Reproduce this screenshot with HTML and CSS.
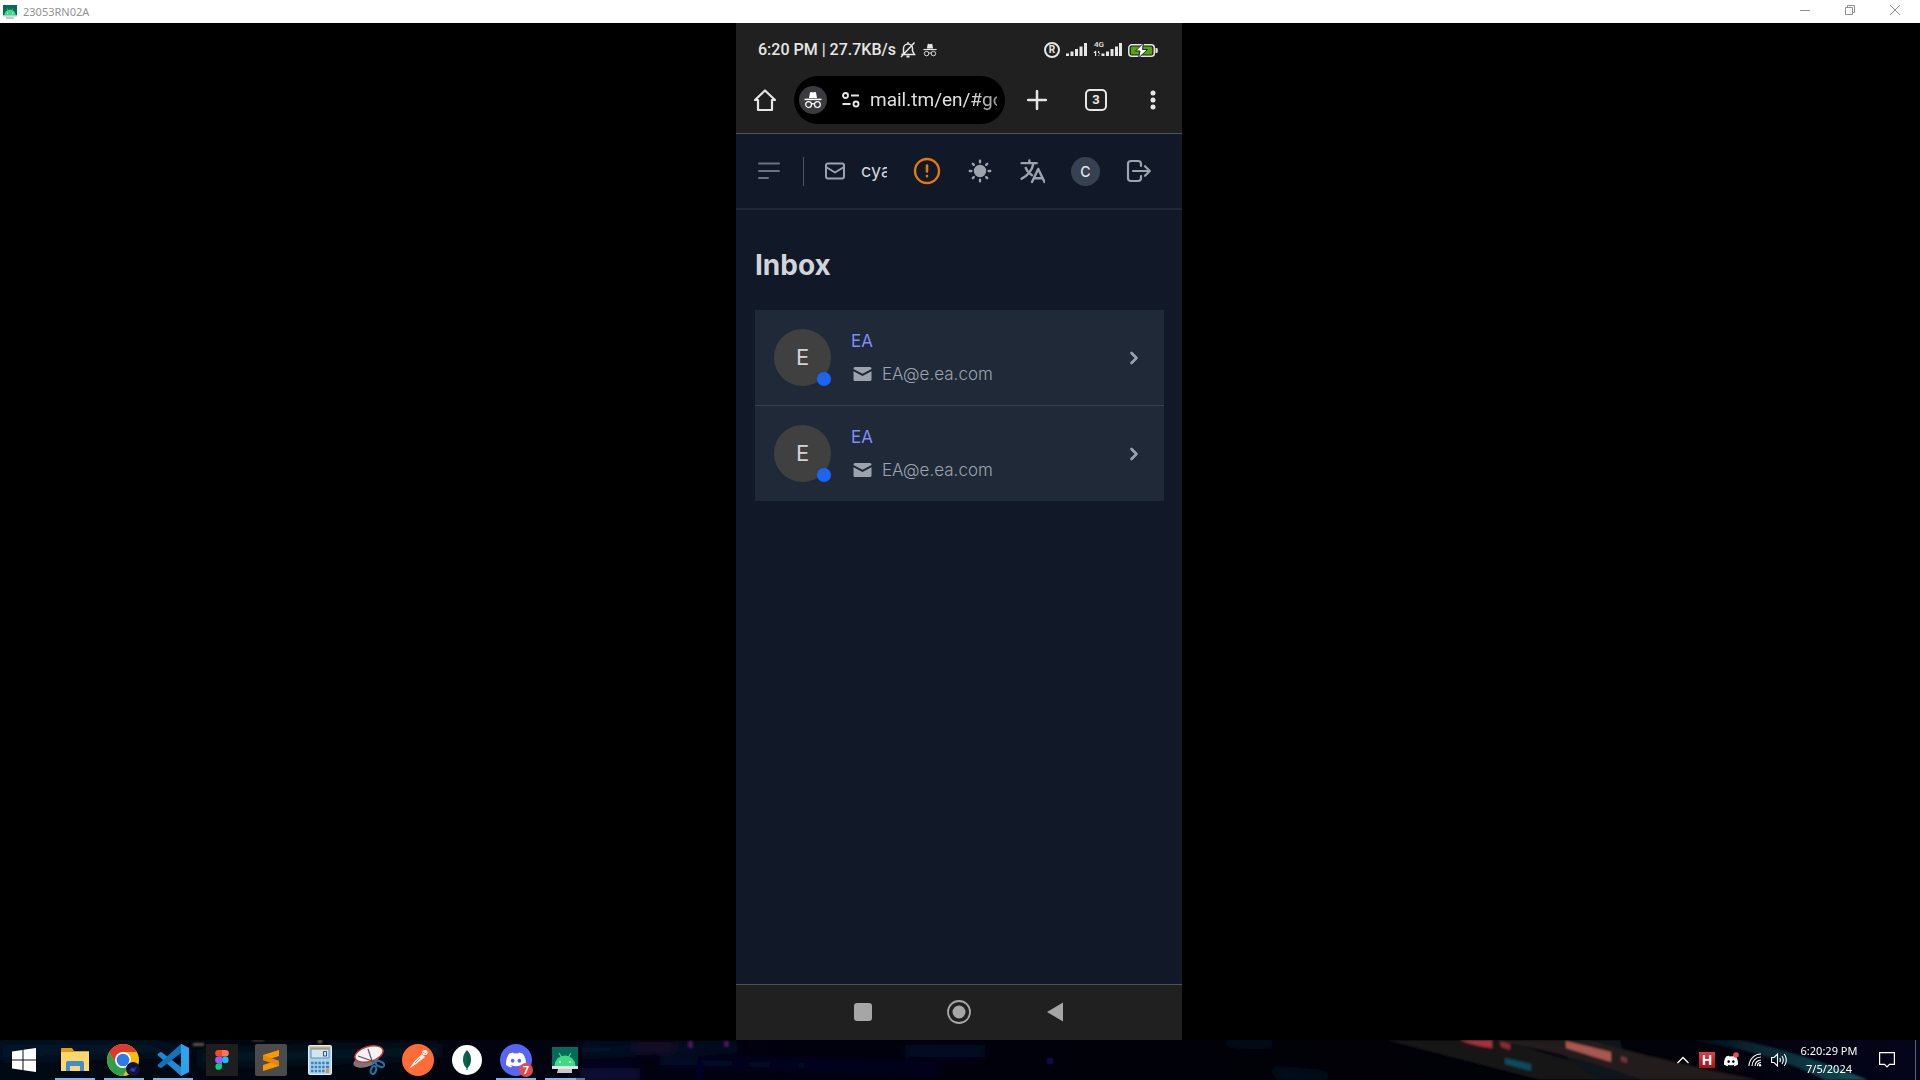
FILE: index.html
```html
<!DOCTYPE html>
<html lang="en">
<head>
<meta charset="utf-8">
<meta name="viewport" content="width=device-width, initial-scale=1">
<title>23053RN02A</title>
<link rel="stylesheet" href="styles.css">
</head>
<body>
<svg class="defs" width="0" height="0" aria-hidden="true">
  <symbol id="incognito" viewBox="0 0 18 18">
    <path d="M5 7 L6 1.6 Q6.3 .8 7.2 1 L9 1.6 L10.8 1 Q11.7 .8 12 1.6 L13 7z" fill="currentColor"/>
    <path d="M.5 8.4H17.5" stroke="currentColor" stroke-width="1.5"/>
    <g fill="none" stroke="currentColor" stroke-width="1.2"><circle cx="4.6" cy="13.6" r="2.9"/><circle cx="13.4" cy="13.6" r="2.9"/><path d="M7.5 13.2Q9 12.2 10.5 13.2"/></g>
  </symbol>
  <symbol id="droid" viewBox="0 0 26 26">
    <path d="M0 0H26V21H0z" fill="#07695c"/>
    <path d="M7 6l2.5 4M19 6l-2.5 4" stroke="#3ddc84" stroke-width="1.2"/>
    <path d="M2.500 19a10.500 10.500 0 0 1 21 0z" fill="#3ddc84"/>
    <circle cx="8" cy="15" r="1.100" fill="#fff"/><circle cx="18" cy="15" r="1.100" fill="#fff"/>
    <path d="M0 19H26V22H0z" fill="#e4e4e4"/><path d="M6 22H20V26H5z" fill="#c8c8c8"/>
  </symbol>
  <symbol id="envelope" viewBox="0 0 20 16">
    <path d="M2.500 1H17.500A1.500 1.500 0 0 1 19 2.500V3L10 7.800 1 3V2.500A1.500 1.500 0 0 1 2.500 1z" fill="currentColor"/>
    <path d="M1 5.200L10 10l9-4.800V13.500A1.500 1.500 0 0 1 17.500 15H2.500A1.500 1.500 0 0 1 1 13.500z" fill="currentColor"/>
  </symbol>
  <symbol id="chevron" viewBox="0 0 10 14"><path d="M2.500 2L7.500 7l-5 5" fill="none" stroke="currentColor" stroke-width="2.600" stroke-linecap="round" stroke-linejoin="round"/></symbol>
  <symbol id="discord" viewBox="0 0 24 24">
    <path d="M20.300 4.400A19.800 19.800 0 0 0 15.400 2.900c-.2.400-.5.900-.6 1.300a18.300 18.300 0 0 0-5.500 0C9.100 3.800 8.800 3.300 8.600 2.900A19.700 19.700 0 0 0 3.700 4.400C.5 9 -.3 13.600.1 18.100a19.900 19.900 0 0 0 6 3c.5-.6.900-1.300 1.200-2a13 13 0 0 1-1.900-.9l.5-.3a14.200 14.200 0 0 0 12.200 0l.5.3c-.6.400-1.200.7-1.900.9.400.7.800 1.400 1.200 2a19.800 19.800 0 0 0 6-3c.5-5.200-.8-9.700-3.600-13.700zM8 15.300c-1.200 0-2.200-1.100-2.200-2.400S6.800 10.500 8 10.500s2.200 1.100 2.200 2.400S9.200 15.300 8 15.300zm8 0c-1.200 0-2.200-1.100-2.200-2.400s1-2.400 2.200-2.400 2.200 1.100 2.200 2.400-1 2.400-2.200 2.400z" fill="#fff"/>
  </symbol>
</svg>

<header class="titlebar">
  <svg class="titlebar-icon" width="14" height="14"><use href="#droid"/></svg>
  <span class="titlebar-name">23053RN02A</span>
  <div class="window-controls">
    <button aria-label="Minimize"><svg width="10" height="10"><path d="M0 5.500H10" stroke="#8f8f8f"/></svg></button>
    <button aria-label="Restore"><svg width="10" height="10" fill="none" stroke="#8f8f8f"><path d="M.5 2.500H7.500V9.500H.5zM2.500 2.500V.5H9.500V7.500H7.500"/></svg></button>
    <button aria-label="Close"><svg width="10" height="10" stroke="#8f8f8f"><path d="M0 0L10 10M10 0L0 10"/></svg></button>
  </div>
</header>

<main class="stage">
  <div class="phone">
    <div class="status">
      <span>6:20 PM | 27.7KB/s</span>
      <svg width="16" height="18" viewBox="0 0 16 18" fill="none" stroke="#e6e6e6" stroke-width="1.500"><path d="M3.500 13V7.500a4.500 4.500 0 0 1 9 0V10L14.500 13.500H1.500zM8 3V1M14.500 1.500L1 16"/><path d="M6.500 15.500h3" stroke-width="2"/></svg>
      <svg width="14" height="14" class="status-incognito"><use href="#incognito"/></svg>
      <div class="status-right">
        <span class="roaming">R</span>
        <svg width="21" height="14" fill="#e6e6e6"><path d="M0 10.500h3v2.500H0zM4.500 8.500h3v4.500h-3zM9 6h3v7H9zM13.500 3.500h3v9.500h-3zM18 0h3v13H18z"/></svg>
        <div class="signal">
          <span class="net">4G</span>
          <svg width="29" height="14" fill="#e6e6e6"><path d="M8.500 10.500h3v2.500h-3zM13 8.500h3v4.500h-3zM17.500 6h3v7h-3zM22 3.500h3v9.500H22zM26 0h3v13h-3zM2 8h1.200v5H2zM.3 10L2.600 7.500V10zM5 8h1.200v5H5zM5 13l2.500-3H5z"/></svg>
        </div>
        <svg width="30" height="15" viewBox="0 0 30 15"><rect x=".8" y="1.800" width="25.500" height="11.500" rx="3" fill="none" stroke="#e6e6e6" stroke-width="1.500"/><rect x="2.800" y="3.500" width="21.500" height="8" rx="1.500" fill="#50a60c"/><path d="M27.500 5h1.500q.8 0 .8 2.500T29 10h-1.500z" fill="#e6e6e6"/><path d="M15.500 0L7.500 8h4.500L10.500 15 19.500 6.500H14.500z" fill="#fff" stroke="#202020"/></svg>
      </div>
    </div>

    <div class="browser-bar">
      <button aria-label="Home"><svg width="22" height="24" viewBox="0 0 22 24" fill="none" stroke="#e6e6e6" stroke-width="2.200" stroke-linejoin="round"><path d="M1 12L11 2.500 21 12H18V22H4V12z"/></svg></button>
      <div class="omnibox">
        <span class="incog"><svg width="18" height="18"><use href="#incognito"/></svg></span>
        <svg class="tune" width="18" height="16" viewBox="0 0 18 16" fill="none" stroke="#e6e6e6" stroke-width="1.900"><circle cx="3.500" cy="3.500" r="2.500"/><path d="M9 3.500h8M.5 12h8"/><circle cx="14" cy="12" r="2.500"/></svg>
        <input type="text" aria-label="Address" value="mail.tm/en/#go">
      </div>
      <button aria-label="New tab"><svg width="20" height="20"><path d="M10 1V19M1 10H19" stroke="#e6e6e6" stroke-width="2.500" stroke-linecap="round"/></svg></button>
      <button class="tabs" aria-label="Open tabs">3</button>
      <button aria-label="More"><svg width="6" height="20" fill="#e6e6e6"><circle cx="3" cy="3" r="2.500"/><circle cx="3" cy="10" r="2.500"/><circle cx="3" cy="17" r="2.500"/></svg></button>
    </div>

    <div class="app-bar">
      <button aria-label="Menu"><svg width="22" height="18" stroke="#6b7280" stroke-width="2" stroke-linecap="round"><path d="M1 1.500H21M1 9H21M1 16H10"/></svg></button>
      <div class="address">
        <svg width="20" height="18" fill="none" stroke="#9ca3af" stroke-width="2" stroke-linejoin="round"><rect x="1" y="1.500" width="18" height="15" rx="2"/><path d="M1 5l9 5.500L19 5"/></svg>
        <input type="text" aria-label="Your address" value="cyan" readonly>
      </div>
      <div class="actions">
        <button aria-label="Status"><svg width="28" height="28" fill="none" stroke="#e07b0c" stroke-width="2.400" stroke-linecap="round"><circle cx="14" cy="14" r="12"/><path d="M14 8.500V14.500M14 19v.2" stroke-width="2.600"/></svg></button>
        <button aria-label="Theme"><svg width="24" height="24" stroke="#9ca3af" stroke-width="2.400" stroke-linecap="round"><circle cx="12" cy="12" r="5" fill="#9ca3af"/><path d="M12 1.800v1.500M12 20.700v1.500M1.800 12h1.500M20.700 12h1.500M4.800 4.800l1 1M18.200 18.200l1 1M4.800 19.200l1-1M18.200 5.800l1-1"/></svg></button>
        <button aria-label="Language"><svg width="25" height="25" viewBox="0 0 24 24" fill="none" stroke="#9ca3af" stroke-width="2.300" stroke-linecap="round" stroke-linejoin="round"><path d="M1.500 4H16M9 1.500V4M13 4C11.500 11 7 16 1.500 19M5.500 8.500c1 3 3 5 6 7M11.500 22L17.500 9.500l6 12.500M13.500 18.500h8"/></svg></button>
        <button class="user" aria-label="Account">C</button>
        <button aria-label="Log out"><svg width="25" height="24" fill="none" stroke="#9ca3af" stroke-width="2.200" stroke-linecap="round" stroke-linejoin="round"><path d="M15 7V5a3 3 0 0 0-3-3H5a3 3 0 0 0-3 3V19a3 3 0 0 0 3 3h7a3 3 0 0 0 3-3V17M7 12H23.500M19 7.200L23.800 12 19 16.800"/></svg></button>
      </div>
    </div>

    <div class="inbox">
      <h1>Inbox</h1>
      <ul class="messages">
        <li><a href="#message-1">
          <span class="avatar">E</span>
          <span class="sender"><span class="name">EA</span><span class="mail"><svg width="21" height="16"><use href="#envelope"/></svg>EA@e.ea.com</span></span>
          <svg width="10" height="14" class="go"><use href="#chevron"/></svg>
        </a></li>
        <li><a href="#message-2">
          <span class="avatar">E</span>
          <span class="sender"><span class="name">EA</span><span class="mail"><svg width="21" height="16"><use href="#envelope"/></svg>EA@e.ea.com</span></span>
          <svg width="10" height="14" class="go"><use href="#chevron"/></svg>
        </a></li>
      </ul>
    </div>

    <nav class="phone-nav">
      <button aria-label="Recents"><svg width="18" height="18"><rect width="18" height="18" rx="3" fill="#a6a6a6"/></svg></button>
      <button aria-label="Home screen"><svg width="24" height="24"><circle cx="12" cy="12" r="11" fill="none" stroke="#a6a6a6" stroke-width="1.800"/><circle cx="12" cy="12" r="6.500" fill="#a6a6a6"/></svg></button>
      <button aria-label="Back"><svg width="18" height="20"><path d="M1 10L17 .5V19.500z" fill="#a6a6a6"/></svg></button>
    </nav>
  </div>
</main>

<footer class="taskbar">
  <svg class="wallpaper" viewBox="0 0 1920 40" preserveAspectRatio="none" aria-hidden="true">
    <defs>
      <filter id="soft"><feGaussianBlur stdDeviation="1"/></filter>
      <filter id="wide" x="-20%" y="-50%" width="140%" height="200%"><feGaussianBlur stdDeviation="5"/></filter>
      <linearGradient id="base"><stop offset="0" stop-color="#010a14"/><stop offset=".2" stop-color="#01050d"/><stop offset=".35" stop-color="#010110"/><stop offset=".7" stop-color="#010107"/><stop offset=".88" stop-color="#02020a"/><stop offset="1" stop-color="#04041c"/></linearGradient>
      <linearGradient id="teal"><stop offset="0" stop-color="#03121f"/><stop offset=".8" stop-color="#135058"/><stop offset="1" stop-color="#1d6a70"/></linearGradient>
    </defs>
    <rect width="1920" height="40" fill="url(#base)"/>
    <g filter="url(#wide)">
      <path d="M0 2H150L200 14 0 20z" fill="#03182a"/><path d="M200 10L440 4V18L200 26z" fill="#021523"/>
      <path d="M580 4H740V10L580 16z" fill="#04142c"/><path d="M580 28h60v12h-60z" fill="#08083a"/><path d="M660 18L940 26V32L660 26z" fill="#06082e"/>
      <path d="M905 5h80v12h-80z" fill="#020f28"/><path d="M1215 0h60v6h-40zM1270 28l60 6v6h-50z" fill="#031626"/>
      <path d="M635 2h40v10h-40z" fill="#1b0a2e"/>
    </g>
    <g filter="url(#soft)">
      <path d="M1385 0H1500L1640 40H1540z" fill="#131419"/><path d="M1540 0H1620L1632 40H1600z" fill="#08141b"/>
      <path d="M1490 0H1590Q1660 20 1760 40H1640Q1580 16 1490 0z" fill="#201a1e"/>
      <path d="M1460 0h32v8q-18-2-32-8z" fill="#a8303a"/><path d="M1500 1l10 3v6l-9-3z" fill="#8b2a34"/>
      <path d="M1566 1L1611 12V22L1566 8z" fill="#a8584f"/><path d="M1621 16l6 2v5l-6-2z" fill="#7b3536"/>
      <path d="M1505 18l26 6v7l-26-7z" fill="#0b4b5d"/>
      <path d="M1690 0H1740Q1800 12 1868 40H1825Q1770 12 1690 0z" fill="url(#teal)" opacity=".8"/>
      <path d="M688 1h5v7h-5zM724 1h5v6h-5z" fill="#4a165a"/><path d="M193 3h11v3h-11z" fill="#5c5548"/><path d="M252 0h12v1h-12zM318 0h4v3h-4z" fill="#6d6a55"/>
      <path d="M696 22h7v18h-7z" fill="#05052a"/><circle cx="1050" cy="21" r="4" fill="#07073c"/>
    </g>
  </svg>

  <button class="start" aria-label="Start"><svg width="24" height="24" fill="#fff"><path d="M0 3.400L10.500 2V11.500H0zM11.500 1.800L24 0V11.500H11.500zM0 12.500H10.500V22L0 20.600zM11.500 12.500H24V24L11.500 22.200z"/></svg></button>
  <div class="apps">
    <button class="running" aria-label="File Explorer"><svg width="28" height="26"><path d="M0 1.500Q0 1 1 1H11L13 4H28V9H0z" fill="#dd9b17"/><path d="M0 5H28V24H0z" fill="#ffd768"/><path d="M5 24V16a2 2 0 0 1 2-2H21a2 2 0 0 1 2 2V24H19V19H9V24z" fill="#3c8fd6"/></svg></button>
    <button class="running" aria-label="Chrome"><svg width="34" height="32" viewBox="0 0 34 32"><circle cx="16" cy="16" r="16" fill="#fbbc05"/><path d="M2.150 8A16 16 0 0 1 29.850 8H16L9.070 20z" fill="#e0382c"/><path d="M2.150 8L9.070 20Q12 24 16 24L22 21 16 32A16 16 0 0 1 2.150 8z" fill="#2fa04a"/><circle cx="16" cy="16" r="8" fill="#fff"/><circle cx="16" cy="16" r="6.300" fill="#2d7bea"/><circle cx="26" cy="25" r="7" fill="#10133a"/><path d="M23 27l2-3 2 3 2-4" stroke="#33338c" stroke-width="1.200" fill="none"/><circle cx="26" cy="26" r="1.800" fill="#3d39d8"/></svg></button>
    <button class="running" aria-label="Visual Studio Code"><svg width="32" height="32" viewBox="0 0 32 32"><path d="M24 0L32 4V28L24 32L1 11.500Q0 10.600 1 9.800L3 8.200Q4 7.800 5 8.500L24 23z" fill="#1f8ad2"/><path d="M24 0L1 20.500Q0 21.400 1 22.200L3 23.800Q4 24.200 5 23.500L24 9z" fill="#0f74ba"/><path d="M24 0L32 4V28L24 32z" fill="#2ba4ee"/></svg></button>
    <button aria-label="Figma"><svg width="32" height="32"><path d="M0 0H32V32H0z" fill="#1e1e1e"/><path d="M16 6H12.500a3.300 3.300 0 0 0 0 6.600H16z" fill="#f24e1e"/><path d="M16 6h3.500a3.300 3.300 0 0 1 0 6.600H16z" fill="#ff7262"/><path d="M16 12.600H12.500a3.300 3.300 0 0 0 0 6.600H16z" fill="#a259ff"/><circle cx="19.300" cy="15.900" r="3.300" fill="#1abcfe"/><path d="M16 19.200H12.500a3.300 3.300 0 1 0 3.500 3.300z" fill="#0acf83"/></svg></button>
    <button aria-label="Sublime Text"><svg width="32" height="32"><rect width="32" height="32" rx="2" fill="#4b4b4b"/><path d="M8 11L24 6V12L16 14.500 24 17V22L8 27V21L16 18.500 8 16z" fill="#ff9800"/><path d="M8 11L24 17V22L8 16z" fill="#e88605"/></svg></button>
    <button aria-label="Calculator"><svg width="24" height="30"><rect x=".5" y=".5" width="23" height="29" rx="1" fill="#a9d3ef" stroke="#e1f0fa"/><path d="M2 2H22V4H2z" fill="#f3a33b"/><path d="M3 4H21V13H3z" fill="#d4e5f0" stroke="#5e8fb6"/><path d="M15.500 6.500h3v4.500h-3z" fill="none" stroke="#305778"/><path d="M3 18H17M3 22H17M3 26H17" stroke="#3d80b5" stroke-width="2.500" stroke-dasharray="2.500 1.200"/><path d="M18 18H21M18 22h3" stroke="#3d80b5" stroke-width="2.500"/><path d="M18 24h3v4h-3z" fill="#f08a24"/></svg></button>
    <button aria-label="Snipping Tool"><svg width="32" height="30"><ellipse cx="13" cy="16" rx="13" ry="6" transform="rotate(-15 13 16)" fill="#7b7777"/><ellipse cx="16" cy="9" rx="14.500" ry="7.500" transform="rotate(-16 16 9)" fill="#f3f3f5" stroke="#cc3039" stroke-width="1.400"/><path d="M15 4L20 19M5 11l17 6" stroke="#555" stroke-width="1.200"/><g fill="none" stroke="#1b74ae" stroke-width="2"><ellipse cx="27" cy="19" rx="4.500" ry="2.500" transform="rotate(25 27 19)"/><ellipse cx="20.500" cy="25" rx="2.500" ry="4" transform="rotate(20 20.500 25)"/></g></svg></button>
    <button aria-label="Postman"><svg width="32" height="32"><circle cx="16" cy="16" r="16" fill="#ff6c37"/><circle cx="23" cy="8.500" r="2.600" fill="#fff"/><path d="M20 10L12 18 14 20 23 13zM12 18L7 25l7-5z" fill="#fff"/><path d="M18 14l-5 5M21 8l3 2" stroke="#ff6c37" stroke-width=".8"/></svg></button>
    <button aria-label="MongoDB"><svg width="30" height="30"><circle cx="15" cy="15" r="15" fill="#fff"/><path d="M15 5Q11 9 11 15 11 20 15 23.500z" fill="#00684a"/><path d="M15 5Q19 9 19 15 19 20 15 23.500z" fill="#0a5744"/><path d="M15 22v3" stroke="#00684a"/></svg></button>
    <button class="running" aria-label="Discord"><svg width="32" height="32"><circle cx="16" cy="16" r="16" fill="#5865f2"/><use href="#discord" x="6" y="6" width="20" height="20"/></svg><span class="badge">7</span></button>
    <button class="running grouped" aria-label="Phone mirror"><svg width="26" height="26"><use href="#droid"/></svg></button>
  </div>

  <div class="tray">
    <button aria-label="Hidden icons"><svg width="16" height="16" fill="none" stroke="#fff" stroke-width="1.300"><path d="M2.500 11L8 5.500 13.500 11"/></svg></button>
    <button aria-label="H"><span class="tray-h">H</span></button>
    <button aria-label="Discord notifications"><svg width="16" height="16"><use href="#discord" x="1" y="2" width="14" height="14"/><circle cx="13" cy="3" r="2.800" fill="#f0474c"/></svg></button>
    <button aria-label="Network"><svg width="16" height="16" fill="none" stroke="#fff" stroke-width="1.100"><path d="M2 14A12 12 0 0 1 14 2M5 14a9 9 0 0 1 9-9M8 14a6 6 0 0 1 6-6M10.500 14a3.500 3.500 0 0 1 3.500-3.500"/><circle cx="13" cy="13.200" r="1.200" fill="#fff" stroke="none"/></svg></button>
    <button aria-label="Volume"><svg width="16" height="16" fill="none" stroke="#fff" stroke-width="1.100"><path d="M.6 5.500H3L6.500 2V14L3 10.500H.6zM8.800 6q1.200 2 0 4M11 4q2.600 4 0 8M13.300 2q4 6 0 12"/></svg></button>
    <button class="clock"><span>6:20:29 PM</span><span>7/5/2024</span></button>
    <button class="notify" aria-label="Notifications"><svg width="16" height="16" fill="none" stroke="#fff" stroke-width="1.200"><path d="M.6.600H15.400V12.400H10.500L8 15 5.500 12.400H.6z"/></svg></button>
    <button class="show-desktop" aria-label="Show desktop"></button>
  </div>
</footer>
</body>
</html>
```
FILE: styles.css
```css
* { box-sizing: border-box; }

body {
  margin: 0;
  min-height: 100vh;
  display: grid;
  grid-template-rows: 23px 1fr 40px;
  background: #000;
  font-family: "Noto Sans", "Open Sans", sans-serif;
}

button {
  display: flex;
  align-items: center;
  justify-content: center;
  padding: 0;
  border: 0;
  background: none;
  color: inherit;
  font: inherit;
}

input {
  min-width: 0;
  padding: 0;
  border: 0;
  background: none;
  outline: 0;
}

svg { display: block; flex: none; }
.defs { position: absolute; }

/* Window title bar */
.titlebar {
  display: flex;
  align-items: center;
  padding: 0 3px;
  background: #fff;
  color: #929292;
  font-size: 11px;
}
.titlebar-icon { margin-right: 6px; }
.window-controls { display: flex; align-self: stretch; margin-left: auto; padding-bottom: 3px; }
.window-controls button { width: 45px; }

/* Mirrored phone */
.stage { display: flex; justify-content: center; padding-right: 2px; }
.phone {
  width: 100%;
  max-width: 446px;
  display: flex;
  flex-direction: column;
  background: #111827;
  font-family: Inter, sans-serif;
}

.status {
  display: flex;
  align-items: center;
  height: 53px;
  padding: 1px 24px 0 22px;
  background: #202020;
  color: #e6e6e6;
  font: 500 16px/20px Roboto, sans-serif;
}
.status > svg { margin-left: 4px; }
.status > .status-incognito { margin-left: 7px; }
.status-right { display: flex; align-items: center; gap: 6px; margin-left: auto; }
.roaming {
  width: 16px;
  height: 16px;
  border: 2px solid #e6e6e6;
  border-radius: 50%;
  font-size: 10px;
  font-weight: 700;
  line-height: 12px;
  text-align: center;
}
.signal { position: relative; }
.net { position: absolute; left: 1px; top: -2px; font-size: 8px; line-height: 8px; }

.browser-bar {
  display: flex;
  align-items: center;
  gap: 18px;
  height: 58px;
  padding: 0 26px 10px 18px;
  background: #202020;
  border-bottom: 1px solid #515151;
  color: #e6e6e6;
}
.browser-bar > button:nth-of-type(2) { margin: 0 20px 0 4px; }
.browser-bar > button:last-child { margin-left: 25px; }
.omnibox {
  flex: 1;
  display: flex;
  align-items: center;
  min-width: 0;
  height: 48px;
  padding: 0 8px 0 5px;
  border-radius: 24px;
  background: #000;
}
.omnibox input {
  flex: 1;
  color: #e0e0e0;
  font: 19px/24px Roboto, sans-serif;
  mask-image: linear-gradient(to right, #000 80%, #000a);
}
.incog {
  display: flex;
  align-items: center;
  justify-content: center;
  width: 28px;
  height: 28px;
  border-radius: 50%;
  background: #3a3a3f;
  color: #fff;
}
.tune { margin: 0 10px 0 15px; }
.tabs {
  width: 22px;
  height: 22px;
  border: 2px solid #e6e6e6;
  border-radius: 5px;
  font: 700 13px/16px Roboto, sans-serif;
}

.app-bar {
  display: flex;
  align-items: center;
  height: 76px;
  padding: 0 29px 0 22px;
  border-bottom: 2px solid #1f2937;
}
.address {
  flex: 1;
  display: flex;
  align-items: center;
  gap: 16px;
  min-width: 0;
  height: 29px;
  margin: 0 25px 0 23px;
  padding-left: 21px;
  border-left: 1px solid #4b5563;
}
.address input { flex: 1; color: #d1d5db; font: 18px/24px Inter, sans-serif; }
.actions { display: flex; align-items: center; gap: 24px; }
.actions button { width: 29px; height: 29px; }
.actions .user {
  border-radius: 50%;
  background: #374151;
  color: #e5e7eb;
  font-size: 14px;
  font-weight: 500;
}

.inbox { flex: 1; padding: 35px 18px 0 19px; }
.inbox h1 { margin: 0; color: #d1d5db; font-size: 28px; line-height: 40px; }
.messages { margin: 25px 0 0; padding: 0; list-style: none; background: #1f2937; }
.messages li + li { border-top: 1px solid #374151; }
.messages a {
  display: flex;
  align-items: center;
  height: 95px;
  padding: 0 25px 0 19px;
  color: #9ca3af;
  font-size: 17px;
  text-decoration: none;
}
.avatar {
  position: relative;
  width: 57px;
  height: 57px;
  border-radius: 50%;
  background: #404040;
  color: #d4d4d8;
  font-size: 22px;
  line-height: 57px;
  text-align: center;
}
.avatar::after {
  content: "";
  position: absolute;
  right: 0;
  bottom: 0;
  width: 14px;
  height: 14px;
  border-radius: 50%;
  background: #1d64f2;
}
.sender { display: flex; flex-direction: column; gap: 9px; margin-left: 20px; line-height: 24px; }
.name { color: #818cf8; }
.mail { display: flex; align-items: center; gap: 9px; padding-left: 1px; font-weight: 300; }
.go { margin-left: auto; }

.phone-nav {
  display: flex;
  align-items: center;
  justify-content: center;
  gap: 24px;
  height: 56px;
  padding-bottom: 2px;
  border-top: 1px solid #515151;
  background: #202020;
}
.phone-nav button { width: 72px; height: 40px; }

/* Desktop task bar */
.taskbar { position: relative; display: flex; color: #fff; overflow: hidden; }
.taskbar button { position: relative; }
.wallpaper { position: absolute; inset: 0; width: 100%; height: 100%; }
.start { width: 48px; margin-right: 2px; }
.apps { display: flex; }
.apps button { width: 49px; }
.apps .running::after {
  content: "";
  position: absolute;
  left: 5px;
  right: 4px;
  bottom: 0;
  height: 2px;
  background: #76b9ed;
}
.apps .grouped::after { background: linear-gradient(to right, #76b9ed 31px, #4d7fa8 31px); }
.badge {
  position: absolute;
  left: 28px;
  top: 23px;
  width: 14px;
  height: 14px;
  border-radius: 50%;
  background: #e5484d;
  font: 700 11px/14px "Open Sans", sans-serif;
  text-align: center;
}
.tray { display: flex; gap: 8px; margin-left: auto; padding-right: 4px; }
.tray-h {
  width: 16px;
  height: 16px;
  background: linear-gradient(#d8434a, #a90f18);
  font: 700 14px/16px "Liberation Sans", sans-serif;
  text-align: center;
}
.tray .clock {
  flex-direction: column;
  width: 68px;
  font-size: 11px;
  line-height: 18px;
}
.tray .notify { width: 32px; }
.tray .show-desktop { width: 5px; border-right: 1px solid #61616b; }
```
